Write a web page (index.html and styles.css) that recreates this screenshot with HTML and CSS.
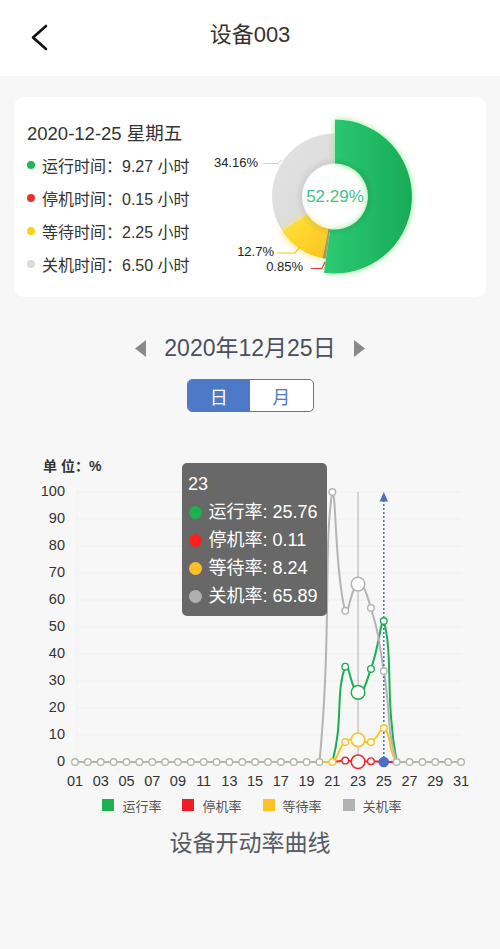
FILE: index.html
```html
<!DOCTYPE html>
<html lang="zh-CN">
<head>
<meta charset="utf-8">
<title>设备003</title>
<link rel="stylesheet" href="styles.css">
</head>
<body>
<header class="header">
  <div class="back">
    <svg width="20" height="28" viewBox="0 0 20 28"><polyline points="17,3 4,14.5 17,26" fill="none" stroke="#111" stroke-width="2.6" stroke-linejoin="round" stroke-linecap="round"/></svg>
  </div>
  <div class="title">设备003</div>
  <div></div>
</header>

<div class="card-wrap">
  <section class="card">
    <div class="summary">
      <div class="sum-date">2020-12-25 星期五</div>
      <ul class="sum-list">
        <li class="sum-row"><span class="dot dot-run"></span>运行时间：9.27 小时</li>
        <li class="sum-row"><span class="dot dot-stop"></span>停机时间：0.15 小时</li>
        <li class="sum-row"><span class="dot dot-wait"></span>等待时间：2.25 小时</li>
        <li class="sum-row"><span class="dot dot-off"></span>关机时间：6.50 小时</li>
      </ul>
    </div>
    <svg class="donut" viewBox="200 97 286 200" width="286" height="200">
      <defs>
        <linearGradient id="gGreen" x1="0" y1="0" x2="1" y2="0">
          <stop offset="0" stop-color="#2ccb73"/>
          <stop offset="1" stop-color="#18ab57"/>
        </linearGradient>
        <linearGradient id="gYellow" x1="0" y1="0" x2="1" y2="1">
          <stop offset="0" stop-color="#ffe53c"/>
          <stop offset="1" stop-color="#fbc21c"/>
        </linearGradient>
        <linearGradient id="gGray" x1="0" y1="0" x2="1" y2="1">
          <stop offset="0" stop-color="#e4e4e4"/>
          <stop offset="1" stop-color="#d7d7d7"/>
        </linearGradient>
        <radialGradient id="gHole" cx="335" cy="196.5" r="40" gradientUnits="userSpaceOnUse">
          <stop offset="0.78" stop-color="#000" stop-opacity="0"/>
          <stop offset="0.84" stop-color="#000" stop-opacity="0.06"/>
          <stop offset="1" stop-color="#000" stop-opacity="0"/>
        </radialGradient>
        <filter id="glowG" x="-40%" y="-30%" width="180%" height="160%">
          <feDropShadow dx="0" dy="0" stdDeviation="3" flood-color="#86ee8e" flood-opacity="0.95"/>
        </filter>
        <filter id="glowY" x="-40%" y="-40%" width="180%" height="180%">
          <feDropShadow dx="-2" dy="0" stdDeviation="4" flood-color="#ffe27a" flood-opacity="0.8"/>
        </filter>
      </defs>
      <path d="M282.15,230.79 A63,63 0 0 1 335,133.5 L335,163.5 A33,33 0 0 0 307.32,214.46 Z" fill="url(#gGray)"/>
      <path d="M322.66,258.28 A63,63 0 0 1 282.15,230.79 L307.32,214.46 A33,33 0 0 0 328.54,228.86 Z" fill="url(#gYellow)" filter="url(#glowY)"/>
      <path d="M325.97,258.85 A63,63 0 0 1 322.66,258.28 L328.54,228.86 A33,33 0 0 0 330.27,229.16 Z" fill="#c0723a"/>
      <path d="M335,119.5 A77,77 0 1 1 323.97,272.71 L330.27,229.16 A33,33 0 1 0 335,163.5 Z" fill="url(#gGreen)" filter="url(#glowG)"/>
      <circle cx="335" cy="196.5" r="40" fill="url(#gHole)"/>
      <text class="pie-center" x="335" y="198" text-anchor="middle" dominant-baseline="middle">52.29%</text>
      <polyline points="263,163.5 278,163.5 282,160" fill="none" stroke="#cfcfcf" stroke-width="1"/>
      <polyline points="277,253 295,253 300,247" fill="none" stroke="#f7c325" stroke-width="1.2"/>
      <polyline points="311,268.5 322,268.5 325,262" fill="none" stroke="#e53935" stroke-width="1.2"/>
      <text class="pie-label" x="258" y="163.5" text-anchor="end" dominant-baseline="middle">34.16%</text>
      <text class="pie-label" x="274" y="253" text-anchor="end" dominant-baseline="middle">12.7%</text>
      <text class="pie-label" x="303" y="268" text-anchor="end" dominant-baseline="middle">0.85%</text>
    </svg>
  </section>
</div>

<div class="date-nav">
  <svg class="tri" width="11" height="17" viewBox="0 0 11 17"><polygon points="11,0 0,8.5 11,17" fill="#8a8a8a"/></svg>
  <span class="date-text">2020年12月25日</span>
  <svg class="tri" width="11" height="17" viewBox="0 0 11 17"><polygon points="0,0 11,8.5 0,17" fill="#8a8a8a"/></svg>
</div>

<div class="toggle">
  <div class="toggle-item active">日</div>
  <div class="toggle-item">月</div>
</div>

<section class="chart">
  <svg class="chart-svg" viewBox="0 450 500 345" width="500" height="345">
    <text class="unit" x="43" y="467" dominant-baseline="middle">单 位：%</text>
    <g class="grid" stroke="#efefef" stroke-width="1">
      <line x1="77" y1="492" x2="462" y2="492"/>
      <line x1="77" y1="519" x2="462" y2="519"/>
      <line x1="77" y1="546" x2="462" y2="546"/>
      <line x1="77" y1="573" x2="462" y2="573"/>
      <line x1="77" y1="600" x2="462" y2="600"/>
      <line x1="77" y1="627" x2="462" y2="627"/>
      <line x1="77" y1="654" x2="462" y2="654"/>
      <line x1="77" y1="681" x2="462" y2="681"/>
      <line x1="77" y1="708" x2="462" y2="708"/>
      <line x1="77" y1="735" x2="462" y2="735"/>
      <line x1="77" y1="492" x2="77" y2="762"/>
    </g>
    <g class="ylab" text-anchor="end">
      <text x="65" y="492" dominant-baseline="middle">100</text>
      <text x="65" y="519" dominant-baseline="middle">90</text>
      <text x="65" y="546" dominant-baseline="middle">80</text>
      <text x="65" y="573" dominant-baseline="middle">70</text>
      <text x="65" y="600" dominant-baseline="middle">60</text>
      <text x="65" y="627" dominant-baseline="middle">50</text>
      <text x="65" y="654" dominant-baseline="middle">40</text>
      <text x="65" y="681" dominant-baseline="middle">30</text>
      <text x="65" y="708" dominant-baseline="middle">20</text>
      <text x="65" y="735" dominant-baseline="middle">10</text>
      <text x="65" y="762" dominant-baseline="middle">0</text>
    </g>
    <g transform="translate(1 0)">
      <g class="xlab" text-anchor="middle">
        <text x="74" y="782" dominant-baseline="middle">01</text>
        <text x="99.73" y="782" dominant-baseline="middle">03</text>
        <text x="125.47" y="782" dominant-baseline="middle">05</text>
        <text x="151.2" y="782" dominant-baseline="middle">07</text>
        <text x="176.93" y="782" dominant-baseline="middle">09</text>
        <text x="202.67" y="782" dominant-baseline="middle">11</text>
        <text x="228.4" y="782" dominant-baseline="middle">13</text>
        <text x="254.13" y="782" dominant-baseline="middle">15</text>
        <text x="279.87" y="782" dominant-baseline="middle">17</text>
        <text x="305.6" y="782" dominant-baseline="middle">19</text>
        <text x="331.33" y="782" dominant-baseline="middle">21</text>
        <text x="357.07" y="782" dominant-baseline="middle">23</text>
        <text x="382.8" y="782" dominant-baseline="middle">25</text>
        <text x="408.53" y="782" dominant-baseline="middle">27</text>
        <text x="434.27" y="782" dominant-baseline="middle">29</text>
        <text x="460" y="782" dominant-baseline="middle">31</text>
      </g>

      <line x1="357.07" y1="492" x2="357.07" y2="762" stroke="#b0b0b0" stroke-width="1"/>

      <g fill="none" stroke-width="2" stroke-linejoin="round">
        <path stroke="#1aaf50" d="M74,762 L331.33,762 C342.68,719.97 334.29,693.5 344.2,666.7 C347.16,658.7 350.41,691.83 357.07,692.4 C363.28,692.93 365.42,681.4 369.93,668.9 C378.28,645.7 379.46,621 382.8,621 C392.33,655.5 383.88,697.4 395.67,762 L460,762"/>
        <path stroke="#f3262b" d="M74,762 L331.33,762 C336,761.5 340,760.6 344.2,760.6 C349,760.6 352,761.7 357.07,761.7 C362,761.7 365,761.2 369.93,761.2 C375,761.2 378,762 382.8,762 L460,762"/>
        <path stroke="#f7c325" d="M74,762 L331.33,762 C339.68,755.5 335.89,749.2 344.2,742 C348.76,738.06 350.64,739.8 357.07,739.8 C363.5,739.8 364.69,744.4 369.93,742 C377.56,738.5 378.38,728 382.8,728 C391.25,734.6 386.17,749.4 395.67,762 L460,762"/>
        <path stroke="#b4b4b4" d="M74,762 L318.47,762 C330.75,633.1 322.4,544.4 331.33,492 C335.3,492 333.9,573.9 344.2,610.8 C346.76,619.95 350.35,584.83 357.07,584.1 C363.22,583.43 366.11,595.1 369.93,608 C378.98,638.55 377.5,639.3 382.8,671 C390.37,716.3 384.38,722.1 395.67,762 L460,762"/>
      </g>

      <g class="mark">
        <line x1="382.8" y1="762" x2="382.8" y2="500" stroke="#4a6fc4" stroke-width="1.5" stroke-dasharray="2 2"/>
        <polygon points="382.8,492 378.6,501.5 387,501.5" fill="#4a6fc4"/>
      </g>

      <g fill="#fff" stroke-width="1.4">
        <g stroke="#1aaf50">
          <circle cx="344.2" cy="666.7" r="3.3"/>
          <circle cx="369.93" cy="668.9" r="3.3"/>
          <circle cx="382.8" cy="621" r="3.3"/>
        </g>
        <g stroke="#f3262b">
          <circle cx="344.2" cy="760.6" r="3.3"/>
          <circle cx="369.93" cy="761.2" r="3.3"/>
        </g>
        <g stroke="#f7c325">
          <circle cx="331.33" cy="762" r="3.3"/>
          <circle cx="344.2" cy="742" r="3.3"/>
          <circle cx="369.93" cy="742" r="3.3"/>
          <circle cx="382.8" cy="728" r="3.3"/>
        </g>
        <g stroke="#b4b4b4">
          <circle cx="331.33" cy="492" r="3.3"/>
          <circle cx="344.2" cy="610.8" r="3.3"/>
          <circle cx="369.93" cy="608" r="3.3"/>
          <circle cx="382.8" cy="671" r="3.3"/>
        </g>
        <g stroke="#b8b5ab">
          <circle cx="74" cy="762" r="3.3"/>
          <circle cx="86.87" cy="762" r="3.3"/>
          <circle cx="99.73" cy="762" r="3.3"/>
          <circle cx="112.6" cy="762" r="3.3"/>
          <circle cx="125.47" cy="762" r="3.3"/>
          <circle cx="138.33" cy="762" r="3.3"/>
          <circle cx="151.2" cy="762" r="3.3"/>
          <circle cx="164.07" cy="762" r="3.3"/>
          <circle cx="176.93" cy="762" r="3.3"/>
          <circle cx="189.8" cy="762" r="3.3"/>
          <circle cx="202.67" cy="762" r="3.3"/>
          <circle cx="215.53" cy="762" r="3.3"/>
          <circle cx="228.4" cy="762" r="3.3"/>
          <circle cx="241.27" cy="762" r="3.3"/>
          <circle cx="254.13" cy="762" r="3.3"/>
          <circle cx="267" cy="762" r="3.3"/>
          <circle cx="279.87" cy="762" r="3.3"/>
          <circle cx="292.73" cy="762" r="3.3"/>
          <circle cx="305.6" cy="762" r="3.3"/>
          <circle cx="318.47" cy="762" r="3.3"/>
          <circle cx="395.67" cy="762" r="3.3"/>
          <circle cx="408.53" cy="762" r="3.3"/>
          <circle cx="421.4" cy="762" r="3.3"/>
          <circle cx="434.27" cy="762" r="3.3"/>
          <circle cx="447.13" cy="762" r="3.3"/>
          <circle cx="460" cy="762" r="3.3"/>
        </g>
        <g stroke-width="1.5">
          <circle cx="357.07" cy="692.4" r="6.8" stroke="#1aaf50"/>
          <circle cx="357.07" cy="761.7" r="6.8" stroke="#f3262b"/>
          <circle cx="357.07" cy="739.8" r="6.8" stroke="#f7c325"/>
          <circle cx="357.07" cy="584.1" r="6.8" stroke="#b4b4b4"/>
        </g>
        <circle cx="382.8" cy="762" r="4.6" fill="#4a6fc4" stroke="#4a6fc4"/>
      </g>
    </g>
  </svg>

  <div class="tooltip">
    <div class="tip-title">23</div>
    <div class="tip-row"><span class="tip-dot tip-run"></span>运行率: 25.76</div>
    <div class="tip-row"><span class="tip-dot tip-stop"></span>停机率: 0.11</div>
    <div class="tip-row"><span class="tip-dot tip-wait"></span>等待率: 8.24</div>
    <div class="tip-row"><span class="tip-dot tip-off"></span>关机率: 65.89</div>
  </div>
</section>

<div class="legend">
  <div class="legend-item"><span class="swatch sw-run"></span>运行率</div>
  <div class="legend-item"><span class="swatch sw-stop"></span>停机率</div>
  <div class="legend-item"><span class="swatch sw-wait"></span>等待率</div>
  <div class="legend-item"><span class="swatch sw-off"></span>关机率</div>
</div>

<div class="chart-title">设备开动率曲线</div>
</body>
</html>
```

FILE: styles.css
```css
html, body {
  margin: 0;
  padding: 0;
}

body {
  width: 500px;
  min-height: 949px;
  background: #f7f7f7;
  font-family: "Liberation Sans", "Noto Sans CJK SC", sans-serif;
  color: #333;
}

.header {
  height: 76px;
  background: #fff;
  display: grid;
  grid-template-columns: 60px 1fr 60px;
  align-items: center;
}

.back {
  display: flex;
  padding-left: 29px;
  padding-bottom: 3px;
}

.title {
  text-align: center;
  font-size: 22px;
  line-height: 30px;
  padding-bottom: 6px;
  color: #333;
}

.card-wrap {
  padding: 21px 14px 0;
}

.card {
  height: 200px;
  background: #fff;
  border-radius: 10px;
  display: flex;
}

.summary {
  width: 186px;
  flex: none;
  box-sizing: border-box;
  padding: 24px 0 0 13px;
}

.sum-date {
  font-size: 18.5px;
  line-height: 26px;
  color: #333;
  white-space: nowrap;
}

.sum-list {
  list-style: none;
  margin: 1.5px 0 0;
  padding: 0;
}

.sum-row {
  display: flex;
  align-items: center;
  height: 33px;
  font-size: 16px;
  color: #333;
  white-space: nowrap;
}

.dot {
  width: 8px;
  height: 8px;
  border-radius: 50%;
  margin-right: 7px;
  flex: none;
}

.dot-run { background: #1db954; }
.dot-stop { background: #e8322e; }
.dot-wait { background: #fcd116; }
.dot-off { background: #dadada; }

.donut {
  display: block;
  flex: none;
  overflow: visible;
}

.pie-center {
  font-size: 17px;
  fill: #3fc287;
}

.pie-label {
  font-size: 13px;
  fill: #222;
}

.date-nav {
  display: flex;
  justify-content: center;
  align-items: center;
  gap: 18px;
  margin-top: 36px;
  height: 30px;
}

.tri {
  display: block;
}

.date-text {
  font-size: 23px;
  line-height: 30px;
  color: #4a5060;
}

.toggle {
  display: flex;
  width: 127px;
  height: 33px;
  margin: 16px auto 0;
  box-sizing: border-box;
  border: 1.5px solid #4d79c7;
  border-radius: 5px;
  overflow: hidden;
  background: #fff;
}

.toggle-item {
  flex: 1;
  display: flex;
  align-items: center;
  justify-content: center;
  font-size: 18px;
  color: #4d79c7;
}

.toggle-item.active {
  background: #4d79c7;
  color: #fff;
}

.chart {
  position: relative;
  height: 345px;
  margin-top: 38px;
}

.chart-svg {
  display: block;
}

.unit {
  font-size: 14px;
  font-weight: bold;
  fill: #333;
}

.ylab, .xlab {
  font-size: 14.5px;
  fill: #333;
}

.tooltip {
  position: absolute;
  left: 182px;
  top: 13px;
  width: 145px;
  box-sizing: border-box;
  padding: 7px 6px 6px;
  background: rgba(80, 80, 80, 0.86);
  border-radius: 5px;
  color: #fff;
  font-size: 18px;
  line-height: 28px;
}

.tip-row {
  display: flex;
  align-items: center;
  white-space: nowrap;
}

.tip-dot {
  width: 13px;
  height: 13px;
  border-radius: 50%;
  margin: 0 7px 0 0.5px;
  flex: none;
}

.tip-run { background: #1cb04f; }
.tip-stop { background: #ff1d1d; }
.tip-wait { background: #fcbf25; }
.tip-off { background: #b0b0b0; }

.legend {
  display: flex;
  justify-content: center;
  align-items: center;
  gap: 21px;
  height: 20px;
  padding-left: 4px;
  font-size: 13px;
  color: #555;
}

.legend-item {
  display: flex;
  align-items: center;
  gap: 8px;
}

.swatch {
  width: 12px;
  height: 12px;
  display: block;
}

.sw-run { background: #1db152; }
.sw-stop { background: #ee1c25; }
.sw-wait { background: #fdc223; }
.sw-off { background: #b2b2b2; }

.chart-title {
  text-align: center;
  font-size: 23px;
  line-height: 32px;
  margin-top: 12px;
  color: #555a65;
}
```
